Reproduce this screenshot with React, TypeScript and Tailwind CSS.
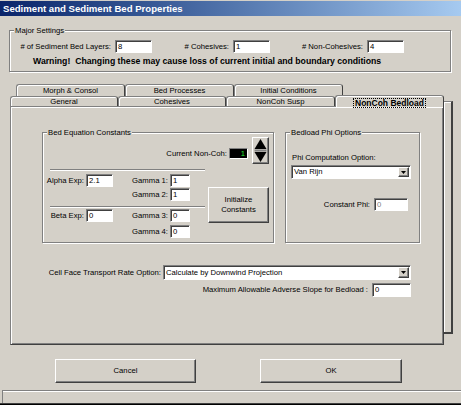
import React from 'react'

// classic 3D edge styles
const etched = 'border border-[#808080] shadow-[inset_1px_1px_0_#fff,1px_1px_0_#fff]'
const sunken =
  'border border-t-[#808080] border-l-[#808080] border-r-white border-b-white shadow-[inset_1px_1px_0_#404040]'
const raised =
  'border border-t-white border-l-white border-r-[#404040] border-b-[#404040] shadow-[inset_-1px_-1px_0_#808080]'

function Group({ title, className, children }: { title: string; className: string; children?: React.ReactNode }) {
  return (
    <div className={`relative ${etched} ${className}`}>
      <span className="absolute -top-[5px] left-[4px] px-[1px] bg-[#d4d0c8] leading-[9px]">{title}</span>
      {children}
    </div>
  )
}

function TextBox({ value, className, muted = false }: { value: string; className: string; muted?: boolean }) {
  return (
    <div
      className={`${sunken} bg-white flex items-center pl-[2px] leading-none ${muted ? 'text-[#808080]' : 'text-black'} ${className}`}
    >
      {value}
    </div>
  )
}

function Dropdown({ value, className }: { value: string; className: string }) {
  return (
    <div className={`${sunken} bg-white flex items-center ${className}`}>
      <span className="flex-1 pl-[2px] leading-none">{value}</span>
      <div className={`${raised} bg-[#d4d0c8] w-[11px] self-stretch m-[1px] flex items-center justify-center`}>
        <svg width="5" height="3" viewBox="0 0 5 3">
          <polygon points="0,0 5,0 2.5,3" fill="#000" />
        </svg>
      </div>
    </div>
  )
}

function Separator({ className }: { className: string }) {
  return <div className={`h-[2px] border-t border-t-[#808080] border-b border-b-white ${className}`} />
}

function Tab({ label, className }: { label: string; className: string }) {
  return (
    <div
      className={`h-full border border-b-0 border-[#808080] border-r-[#404040] rounded-t-[3px] shadow-[inset_1px_1px_0_#fff] flex items-center justify-center leading-[9px] ${className}`}
    >
      {label}
    </div>
  )
}

function Spinner() {
  return (
    <div className={`${raised} bg-[#d4d0c8] w-[17px] h-[27px] flex items-center justify-center`}>
      <svg width="13" height="25" viewBox="0 0 13 25">
        <polygon points="6.5,1 12.5,11 0.5,11" fill="#000" />
        <rect x="0.5" y="11.5" width="12" height="2" fill="#808080" />
        <polygon points="0.5,14 12.5,14 6.5,24" fill="#000" />
      </svg>
    </div>
  )
}

export default function App() {
  return (
    <div className="w-[461px] h-[405px] bg-[#d4d0c8] font-['Liberation_Sans',Arial,sans-serif] text-[7.7px] text-black flex flex-col overflow-hidden select-none">
      {/* title bar */}
      <div className="mt-[1px] h-[15px] bg-linear-to-r from-[#0a246a] to-[#a6caf0] flex items-center pl-[3px]">
        <span className="text-white font-bold text-[9.6px] leading-none">Sediment and Sediment Bed Properties</span>
      </div>

      {/* major settings */}
      <Group title="Major Settings" className="ml-[9px] mt-[14px] w-[442px] h-[42px] shrink-0">
        <div className="flex items-center mt-[9px] h-[13px]">
          <span className="w-[105px] text-right pr-[4px]"># of Sediment Bed Layers:</span>
          <TextBox value="8" className="w-[37px] h-[13px]" />
          <span className="w-[81px] text-right pr-[4px]"># Cohesives:</span>
          <TextBox value="1" className="w-[37px] h-[13px]" />
          <span className="w-[97px] text-right pr-[4px]"># Non-Cohesives:</span>
          <TextBox value="4" className="w-[37px] h-[13px]" />
        </div>
        <div className="mt-[3px] pl-[23px] font-bold text-[8.7px] leading-[10px] whitespace-pre">
          Warning!  Changing these may cause loss of current initial and boundary conditions
        </div>
      </Group>

      {/* tab control */}
      <div className="relative ml-[10px] mt-[12px] w-[434px] shrink-0">
        <div className="absolute left-[434px] top-[17px] w-[9px] h-[233px] bg-[#d4d0c8] border-t border-t-[#808080] border-r-2 border-r-[#404040] border-b-2 border-b-[#404040] shadow-[inset_1px_1px_0_#fff]" />

        <div className="flex h-[12px] pl-[6px]">
          <Tab label="Morph & Consol" className="w-[109px]" />
          <Tab label="Bed Processes" className="w-[109px]" />
          <Tab label="Initial Conditions" className="w-[109px]" />
        </div>
        <div className="flex h-[10px] relative z-10">
          <Tab label="General" className="w-[108px] bg-[#d4d0c8]" />
          <Tab label="Cohesives" className="w-[108px] bg-[#d4d0c8]" />
          <Tab label="NonCoh Susp" className="w-[109px] bg-[#d4d0c8]" />
          <div className="w-[109px] h-[12px] -mt-[1px] bg-[#d4d0c8] border border-b-0 border-[#808080] border-r-[#404040] rounded-t-[3px] shadow-[inset_1px_1px_0_#fff] flex justify-center pt-[2px]">
            <span className="font-bold text-[8.5px] leading-[8px] h-[10px] px-[1px] border border-dotted border-black">
              NonCoh Bedload
            </span>
          </div>
        </div>

        <div className="relative h-[239px] bg-[#d4d0c8] border border-t-[#808080] border-l-[#808080] border-r-[#404040] border-b-[#404040] shadow-[inset_1px_1px_0_#fff,inset_-1px_-1px_0_#808080]">
          <div className="flex mt-[25px] ml-[31px] gap-[11px]">
            {/* bed equation constants */}
            <Group title="Bed Equation Constants" className="w-[232px] h-[111px]">
              <div className="flex justify-end items-start pt-[4px] pr-[4px]">
                <span className="mt-[12px] leading-[9px] mr-[2px]">Current Non-Coh:</span>
                <div className="mt-[11px] w-[19px] h-[11px] bg-black border border-t-[#808080] border-l-[#808080] border-r-white border-b-white flex items-center justify-end pr-[2px] text-[#22e830] leading-none">
                  1
                </div>
                <div className="ml-[4px]">
                  <Spinner />
                </div>
              </div>
              <div className="flex">
                <div className="w-[162px]">
                  <Separator className="mt-[5px] ml-[7px] w-[155px]" />
                  <div className="grid grid-cols-[43px_27px_57px_20px] gap-y-[1px] mt-[3px] items-center">
                    <span className="text-right pr-[2px]">Alpha Exp:</span>
                    <TextBox value="2.1" className="h-[13px]" />
                    <span className="text-right pr-[2px]">Gamma 1:</span>
                    <TextBox value="1" className="h-[13px]" />
                    <span />
                    <span />
                    <span className="text-right pr-[2px]">Gamma 2:</span>
                    <TextBox value="1" className="h-[13px]" />
                  </div>
                  <Separator className="mt-[5px] ml-[7px] w-[155px]" />
                  <div className="grid grid-cols-[43px_27px_57px_20px] gap-y-[3px] mt-[1px] items-center">
                    <span className="text-right pr-[2px]">Beta Exp:</span>
                    <TextBox value="0" className="h-[13px]" />
                    <span className="text-right pr-[2px]">Gamma 3:</span>
                    <TextBox value="0" className="h-[13px]" />
                    <span />
                    <span />
                    <span className="text-right pr-[2px]">Gamma 4:</span>
                    <TextBox value="0" className="h-[13px]" />
                  </div>
                </div>
                <button
                  className={`${raised} bg-[#d4d0c8] ml-[3px] mt-[23px] w-[61px] h-[36px] flex flex-col items-center justify-center leading-[10px]`}
                >
                  <span>Initialize</span>
                  <span>Constants</span>
                </button>
              </div>
            </Group>

            {/* bedload phi options */}
            <Group title="Bedload Phi Options" className="w-[135px] h-[111px]">
              <div className="mt-[20px] pl-[6px] leading-[9px]">Phi Computation Option:</div>
              <Dropdown value="Van Rijn" className="mt-[3px] ml-[5px] w-[120px] h-[14px]" />
              <div className="flex justify-end items-center mt-[19px] pr-[11px]">
                <span className="mr-[4px]">Constant Phi:</span>
                <TextBox value="0" muted className="w-[34px] h-[13px]" />
              </div>
            </Group>
          </div>

          <div className="flex items-center mt-[22px]">
            <span className="w-[152px] text-right pr-[2px]">Cell Face Transport Rate Option:</span>
            <Dropdown value="Calculate by Downwind Projection" className="w-[248px] h-[15px]" />
          </div>
          <div className="flex items-center mt-[3px]">
            <span className="w-[361px] text-right pr-[4px]">Maximum Allowable Adverse Slope for Bedload :</span>
            <TextBox value="0" className="w-[39px] h-[14px]" />
          </div>
        </div>
      </div>

      {/* dialog buttons */}
      <div className="flex mt-[14px] shrink-0">
        <button className={`${raised} bg-[#d4d0c8] ml-[55px] w-[141px] h-[24px] flex items-center justify-center`}>Cancel</button>
        <button className={`${raised} bg-[#d4d0c8] ml-[64px] w-[142px] h-[24px] flex items-center justify-center`}>OK</button>
      </div>

      {/* status strip */}
      <div className="mt-[7px] h-[13px] shrink-0 border-t border-t-[#808080] border-l border-l-[#808080] ml-[2px] shadow-[inset_0_1px_0_#fff]" />
      <div className="h-[2px] bg-[#404040] border-b border-b-black shrink-0" />
    </div>
  )
}
